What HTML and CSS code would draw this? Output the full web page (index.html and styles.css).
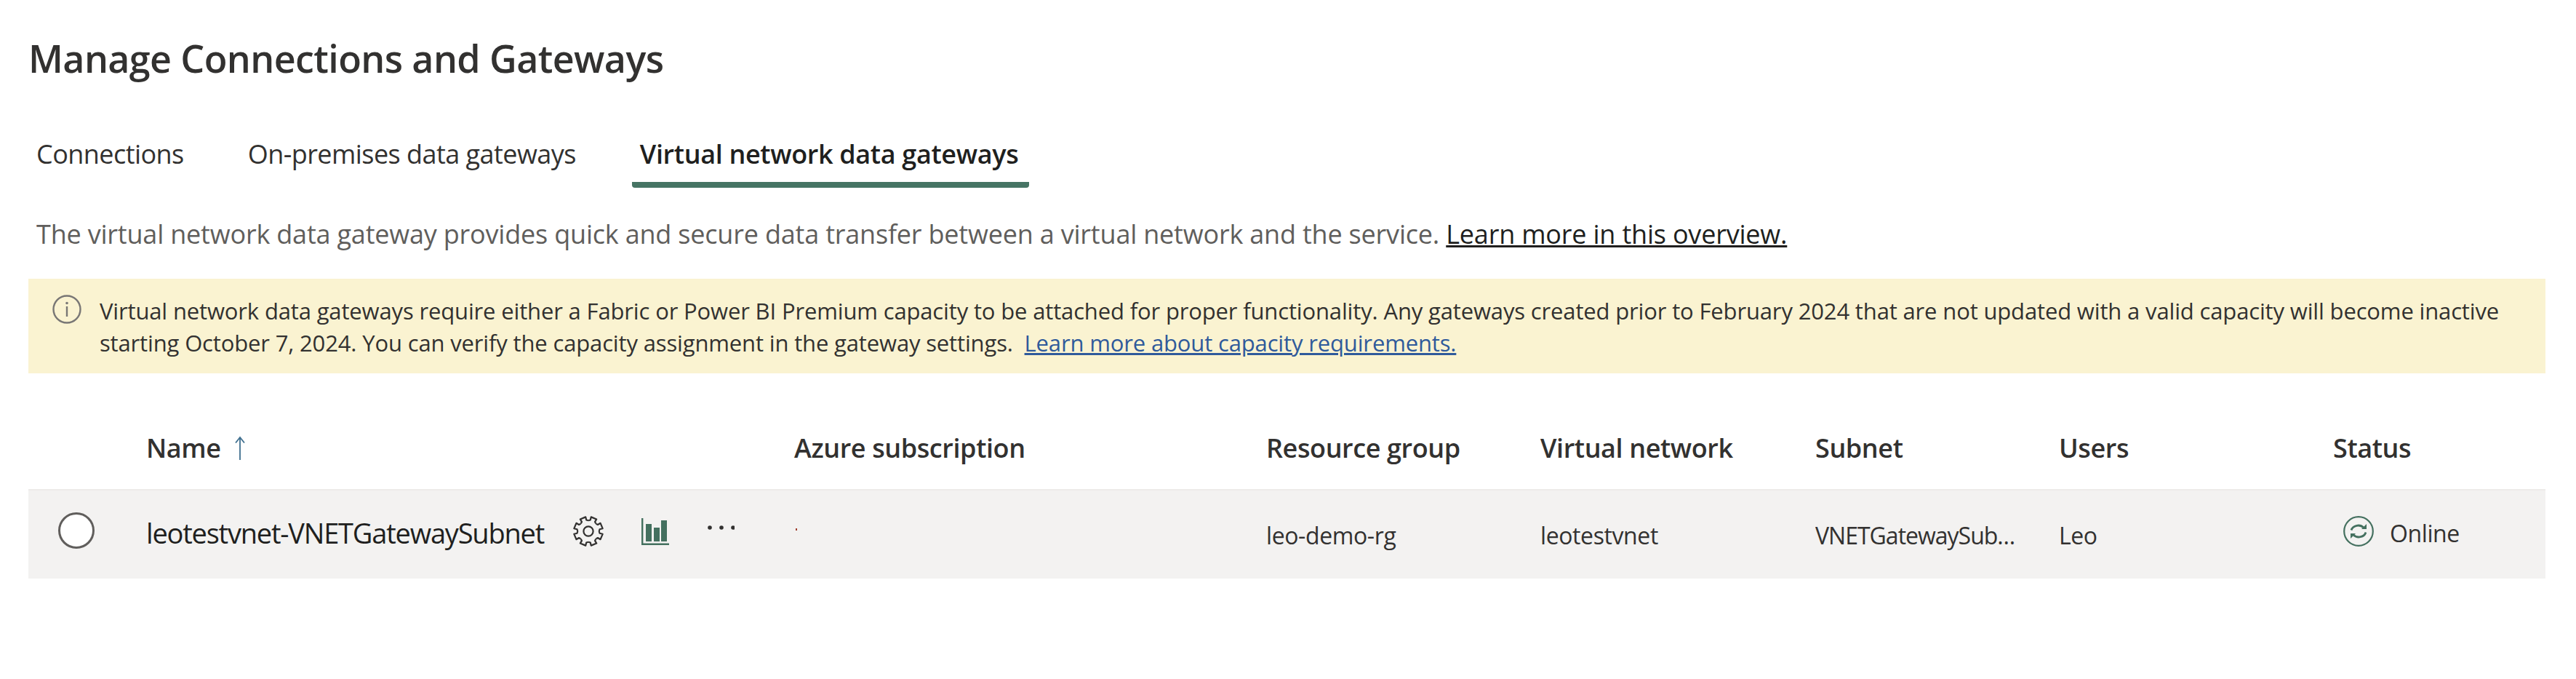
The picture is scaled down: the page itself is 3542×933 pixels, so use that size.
FILE: index.html
```html
<!DOCTYPE html>
<html lang="en">
<head>
<meta charset="utf-8">
<title>Manage Connections and Gateways</title>
<link rel="stylesheet" href="styles.css">
</head>
<body>
<main class="page">
  <h1 class="title">Manage Connections and Gateways</h1>
  <nav class="tabs">
    <a class="tab">Connections</a>
    <a class="tab">On-premises data gateways</a>
    <a class="tab tab-active">Virtual network data gateways</a>
  </nav>
  <p class="desc">The virtual network data gateway provides quick and secure data transfer between a virtual network and the service. <a class="desc-link">Learn more in this overview.</a></p>
  <div class="banner">
    <svg class="info-icon" viewBox="0 0 40 40" width="40" height="40">
      <circle cx="20" cy="20" r="18.5" fill="none" stroke="#797775" stroke-width="2.4"/>
      <rect x="18.8" y="16" width="2.4" height="14" fill="#797775"/>
      <circle cx="20" cy="11.5" r="1.8" fill="#797775"/>
    </svg>
    <p class="banner-text">Virtual network data gateways require either a Fabric or Power BI Premium capacity to be attached for proper functionality. Any gateways created prior to February 2024 that are not updated with a valid capacity will become inactive starting October 7, 2024. You can verify the capacity assignment in the gateway settings. &nbsp;<a class="banner-link">Learn more about capacity requirements.</a></p>
  </div>
  <div class="table">
    <div class="grid head">
      <span></span>
      <span class="name-head">Name
        <svg class="sort-icon" viewBox="0 0 16 34" width="16" height="34">
          <path d="M8 33V2M2 9.5L8 2l6 7.5" fill="none" stroke="#3f6f8f" stroke-width="1.8"/>
        </svg>
      </span>
      <span>Azure subscription</span>
      <span>Resource group</span>
      <span>Virtual network</span>
      <span>Subnet</span>
      <span>Users</span>
      <span>Status</span>
    </div>
    <div class="grid row">
      <span class="radio-cell"><span class="radio"></span></span>
      <span class="name-cell">
        <span class="row-name">leotestvnet-VNETGatewaySubnet</span>
        <svg class="gear" viewBox="-21 -21 42 42" width="42" height="42">
          <defs>
            <path id="tooth" d="M-5.6-13.6L-3.4-15.4-4-19.6 4-19.6 3.4-15.4 5.6-13.6" fill="none" stroke="#323130" stroke-width="2.2" stroke-linejoin="round"/>
          </defs>
          <use href="#tooth" transform="rotate(22.5)"/>
          <use href="#tooth" transform="rotate(67.5)"/>
          <use href="#tooth" transform="rotate(112.5)"/>
          <use href="#tooth" transform="rotate(157.5)"/>
          <use href="#tooth" transform="rotate(202.5)"/>
          <use href="#tooth" transform="rotate(247.5)"/>
          <use href="#tooth" transform="rotate(292.5)"/>
          <use href="#tooth" transform="rotate(337.5)"/>
          <circle r="6.6" fill="none" stroke="#323130" stroke-width="2.2"/>
        </svg>
        <svg class="chart" viewBox="0 0 38 38" width="38" height="38">
          <path d="M1.2 0V35.8H38" fill="none" stroke="#44705f" stroke-width="2.4"/>
          <rect x="6" y="8" width="8" height="24" fill="#44705f"/>
          <rect x="17" y="13" width="8" height="19" fill="#44705f"/>
          <rect x="27" y="3" width="8" height="29" fill="#44705f"/>
        </svg>
        <svg class="more" viewBox="0 0 38 8" width="38" height="8">
          <circle cx="4" cy="4" r="2.8" fill="#323130"/>
          <circle cx="20" cy="4" r="2.8" fill="#323130"/>
          <circle cx="36" cy="4" r="2.8" fill="#323130"/>
        </svg>
      </span>
      <span class="azure-cell"><span class="tiny-mark"></span></span>
      <span class="cell">leo-demo-rg</span>
      <span class="cell">leotestvnet</span>
      <span class="cell subnet">VNETGatewaySubnet</span>
      <span class="cell">Leo</span>
      <span class="status">
        <svg class="sync" viewBox="-21 -21 42 42" width="42" height="42">
          <circle r="19.8" fill="none" stroke="#44705f" stroke-width="2.2"/>
          <defs>
            <g id="half">
              <path d="M-10-1.5A10 9 0 0 1 7-5" fill="none" stroke="#44705f" stroke-width="2.8"/>
              <path d="M11-10V-3H4Z" fill="#44705f"/>
            </g>
          </defs>
          <use href="#half"/>
          <use href="#half" transform="rotate(180)"/>
        </svg>
        <span class="status-text">Online</span>
      </span>
    </div>
  </div>
</main>
</body>
</html>
```
FILE: styles.css
```css
html, body {
  margin: 0;
  padding: 0;
  background: #fff;
}
body {
  font-family: "Open Sans", "Noto Sans", sans-serif;
  color: #323130;
}
.page {
  padding: 44px 42px 0 39px;
}
.title {
  margin: 0;
  font-size: 52px;
  line-height: 72px;
  font-weight: 600;
  letter-spacing: -0.6px;
  color: #323130;
}
.tabs {
  display: flex;
  gap: 66px;
  margin-top: 68px;
}
.tab {
  display: block;
  padding: 0 11px;
  height: 74px;
  box-sizing: border-box;
  font-size: 36px;
  line-height: 56px;
  letter-spacing: -0.55px;
  color: #323130;
}
.tab-active {
  padding-right: 15px;
  font-weight: 600;
  letter-spacing: -0.35px;
  color: #201f1e;
  border-bottom: 8px solid #467464;
  border-radius: 0 0 4px 4px;
}
.desc {
  margin: 39px 0 0 11px;
  font-size: 36px;
  line-height: 50px;
  letter-spacing: -0.2px;
  color: #605e5c;
}
.desc-link {
  color: #201f1e;
  text-decoration: underline;
}
.banner {
  display: flex;
  gap: 25px;
  margin-top: 36px;
  height: 130px;
  box-sizing: border-box;
  padding: 22px 24px 0 33px;
  background: #faf3d1;
}
.info-icon {
  flex: none;
}
.banner-text {
  margin: 0;
  font-size: 31px;
  line-height: 44px;
  letter-spacing: -0.15px;
  color: #323130;
}
.banner-link {
  color: #2f5a9b;
  text-decoration: underline;
}
.table {
  margin-top: 76px;
}
.grid {
  display: grid;
  grid-template-columns: 162px 891px 649px 377px 378px 335px 377px 292px;
  align-items: center;
}
.head {
  height: 83px;
  box-sizing: border-box;
  padding-bottom: 30px;
  font-size: 36px;
  font-weight: 600;
  letter-spacing: -0.4px;
  color: #323130;
}
.name-head {
  display: flex;
  align-items: center;
  gap: 18px;
}
.sort-icon {
  display: block;
}
.row {
  height: 123px;
  box-sizing: border-box;
  background: #f3f2f1;
  border-top: 2px solid #edebe9;
  font-size: 32px;
  letter-spacing: -0.4px;
}
.radio-cell {
  display: flex;
  padding-left: 41px;
  margin-top: -11px;
}
.radio {
  display: block;
  width: 50px;
  height: 50px;
  box-sizing: border-box;
  border: 3px solid #605e5c;
  border-radius: 50%;
  background: #fff;
}
.name-cell {
  display: flex;
  align-items: center;
}
.row-name {
  width: 587px;
  margin-top: -6px;
  font-size: 38px;
  letter-spacing: -1.2px;
  color: #201f1e;
}
.gear {
  margin-top: -9px;
}
.chart {
  margin-left: 52px;
  margin-top: -8px;
}
.more {
  margin-left: 52px;
  margin-top: -19px;
}
.azure-cell {
  display: flex;
}
.tiny-mark {
  display: block;
  width: 2px;
  height: 3px;
  margin: -9px 0 0 2px;
  background: #a04030;
}
.cell {
  padding-top: 2px;
}
.subnet {
  max-width: 280px;
  letter-spacing: -1px;
  white-space: nowrap;
  overflow: hidden;
  text-overflow: ellipsis;
}
.status {
  display: flex;
  align-items: center;
  gap: 22px;
  padding-left: 14px;
  margin-top: -9px;
}
.status-text {
  margin-top: 4px;
}
```
